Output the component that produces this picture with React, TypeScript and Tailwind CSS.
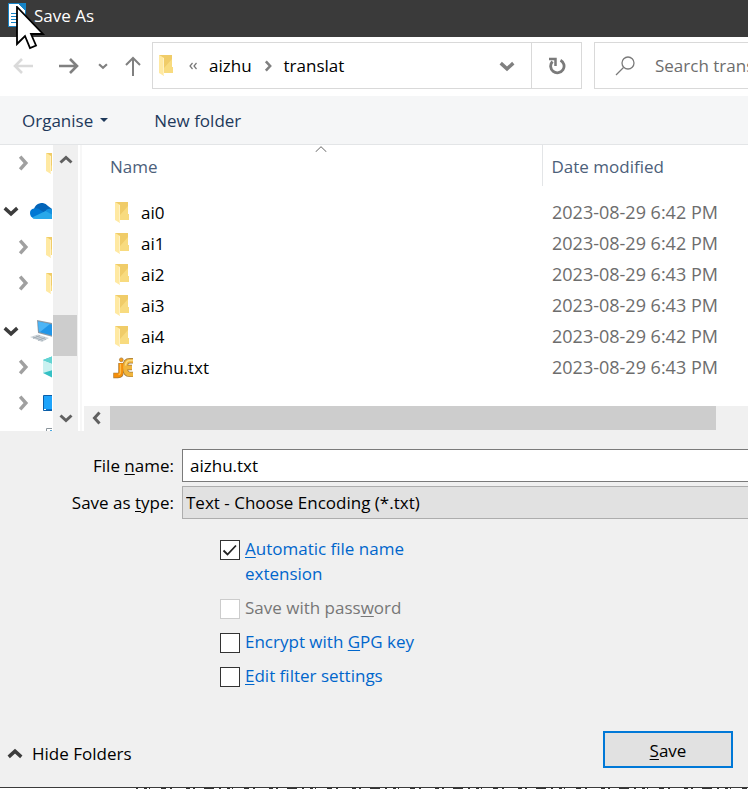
import type { ReactNode } from "react";

const folders = [
  { name: "ai0", date: "2023-08-29 6:42 PM" },
  { name: "ai1", date: "2023-08-29 6:42 PM" },
  { name: "ai2", date: "2023-08-29 6:43 PM" },
  { name: "ai3", date: "2023-08-29 6:43 PM" },
  { name: "ai4", date: "2023-08-29 6:42 PM" },
  { name: "aizhu.txt", date: "2023-08-29 6:43 PM", file: true },
];

type Direction = "up" | "down" | "left" | "right";

const chevrons: Record<Direction, string> = {
  up: "M1.5 9.5 7 4.5l5.5 5",
  down: "M1.5 4.5 7 9.5l5.5-5",
  left: "M9.5 1.5 4.5 7l5 5.5",
  right: "M4.5 1.5 9.5 7l-5 5.5",
};

function Chevron({ to, className = "size-4", width = 3 }: { to: Direction; className?: string; width?: number }) {
  return (
    <svg viewBox="0 0 14 14" className={`shrink-0 ${className}`} fill="none" stroke="currentColor" strokeWidth={width} aria-hidden="true">
      <path d={chevrons[to]} />
    </svg>
  );
}

function FolderIcon() {
  return (
    <svg viewBox="0 0 14 21" className="h-[21px] w-3.5 shrink-0" aria-hidden="true">
      <path d="M0 0h13v12h1v6H3z" fill="#f8db7f" />
      <path d="M0 0h13v4L5 13V3z" fill="#f0cc68" />
      <path d="M0 0l5 3v18l-5-3z" fill="#ffe9a2" />
      <path d="M4 3h1v18l-1-1z" fill="#fff1c4" />
    </svg>
  );
}

function JEditIcon() {
  return (
    <svg viewBox="0 0 21 22" className="-ml-0.5 h-[22px] w-[21px] shrink-0" fill="none" aria-hidden="true">
      <g stroke="#a07a3c" strokeWidth="5.4">
        <path d="M8 6v9q0 3.5-3 3.5H0.3" />
        <path d="M20 3.8h-3q-5 0-5 6.7t5 6.9h3M12 10.500h7" />
      </g>
      <path d="M20 3.800h-3q-5 0-5 6.700t5 6.900h3M12 10.500h7" stroke="#f0b43c" strokeWidth="4" />
      <path d="M20 3.500h-3q-4 0-4.500 5" stroke="#fbdc82" strokeWidth="1.500" />
      <path d="M8 6.300v9q0 3-3 3H.8" stroke="#f58e0a" strokeWidth="4.200" />
      <path d="M7.500 7v8q0 2.500-2 2.500" stroke="#fdbd4a" strokeWidth="1.300" />
      <circle cx="8.300" cy="2.800" r="1.900" fill="#fa9a15" stroke="#a07a3c" strokeWidth=".7" />
    </svg>
  );
}

function CloudIcon() {
  return (
    <svg viewBox="0 0 26 16" className="h-4 w-[26px] shrink-0" aria-hidden="true">
      <path d="M4 6a8 8 0 0 1 14-3l4 3-5 6L6 9z" fill="#0364b8" />
      <path d="M4 5.500q4-1 7 2l5 3-12 5Q0 14 0 10q0-4 4-4.500z" fill="#0078d4" />
      <path d="M16 7q3-2 6-1 4 1 4 5v3l-11-4z" fill="#1490df" />
      <path d="M2 14.500 15.500 8l10.500 5.500q-1 2.500-5 2.500H6q-3 0-4-1.500z" fill="#28a8ea" />
    </svg>
  );
}

function ComputerIcon() {
  return (
    <svg viewBox="0 0 28 24" className="h-6 w-7 shrink-0" aria-hidden="true">
      <path d="M7 1l20 4v14L8 14z" fill="#8d9aa5" />
      <path d="M8 2.500l19 4V18L9 13z" fill="#2196e8" />
      <path d="M8 2.500l12 2.500-10 8-1-.5z" fill="#4db5f5" />
      <path d="M0 18l8-2.500 11 3.500-7 4z" fill="#ced5da" />
      <path d="M3 18l10 3.500M6 17l10 3.500M3 19.500l7-3M8 21.500l7-3" stroke="#9eaab3" strokeWidth=".8" />
    </svg>
  );
}

function CubeIcon() {
  return (
    <svg viewBox="0 0 20 22" className="h-[22px] w-5 shrink-0" aria-hidden="true">
      <path d="M0 4l10-4 10 4v13l-10 5-10-5z" fill="#35c0c4" />
      <path d="M0 4l10 4v6L0 17z" fill="#c9f1f0" />
      <path d="M0 4l10-4v8z" fill="#62d4d3" />
    </svg>
  );
}

function DesktopIcon() {
  return (
    <svg viewBox="0 0 20 16" className="h-4 w-5 shrink-0" aria-hidden="true">
      <path d="M.5.5h19v15H.5z" fill="#1ea4fb" stroke="#0b5ea8" />
      <path d="M1 14.500h19" stroke="#0873cc" />
      <path d="M1 14.500h2" stroke="#fff" />
    </svg>
  );
}

function DocumentsIcon() {
  return (
    <svg viewBox="0 0 20 22" className="h-[22px] w-5 shrink-0" aria-hidden="true">
      <path d="M.5.500h17v21H.5z" fill="#fff" stroke="#8b959c" />
      <path d="M4 2h12v4H4z" fill="#4da9e0" />
    </svg>
  );
}

function TreeRow({ label, open, root, children }: { label: string; open?: boolean; root?: boolean; children: ReactNode }) {
  return (
    <li className={`flex h-9 shrink-0 items-center ${root ? "mt-3 gap-[11px] pl-[3px]" : "gap-[15px] pl-[15px]"}`}>
      <button type="button" aria-label={label} className={open ? "text-[#3c3c3c]" : "text-[#a0a0a0]"}>
        <Chevron to={open ? "down" : "right"} />
      </button>
      {children}
    </li>
  );
}

function Option({ id, checked, disabled, children }: { id: string; checked?: boolean; disabled?: boolean; children: ReactNode }) {
  return (
    <div className="flex items-start gap-[5px]">
      <span className="mt-1 grid size-5 shrink-0">
        <input
          id={id}
          type="checkbox"
          defaultChecked={checked}
          disabled={disabled}
          className="peer col-start-1 row-start-1 size-5 appearance-none border border-[#333] bg-white disabled:border-[#ccc]"
        />
        <svg viewBox="0 0 20 20" className="pointer-events-none invisible col-start-1 row-start-1 size-5 peer-checked:visible" fill="none" stroke="#222" strokeWidth="1.800" aria-hidden="true">
          <path d="M3.500 10.500l4 4L16 5.500" />
        </svg>
      </span>
      <label htmlFor={id} className={disabled ? "text-[#777]" : "text-[#0066cc]"}>
        {children}
      </label>
    </div>
  );
}

function Key({ children }: { children: string }) {
  return <span className="underline decoration-1 underline-offset-2">{children}</span>;
}

export default function App() {
  return (
    <div className="overflow-hidden bg-[#f0f0f0] font-['Open_Sans','Noto_Sans',sans-serif] text-[17px] leading-[25px] text-black">
      <header className="relative flex h-[37px] items-center gap-2 bg-[#3a3a3a] pb-[7px] pl-2 text-white">
        <svg viewBox="0 0 18 24" className="h-6 w-[18px]" aria-hidden="true">
          <path d="M.5.500h10l7 7v16H.5z" fill="#fff" stroke="#1583c6" />
          <path d="M10 0h8v8z" fill="#1583c6" />
          <path d="M3 10.500h11M3 13.500h11M3 16.500h11M3 19.500h8" stroke="#1583c6" />
        </svg>
        <h1>Save As</h1>
        <svg viewBox="0 0 30 44" className="absolute top-[6px] left-4 z-10 h-11 w-[30px]" aria-hidden="true">
          <path d="M1 1v37l8-8 5 12 6-2.500-5-11.500h12z" fill="#fff" stroke="#000" strokeWidth="1.800" />
        </svg>
      </header>

      <nav className="flex items-center bg-white pt-[5px] pb-[7px]" aria-label="Location">
        <button type="button" aria-label="Back" className="flex w-[46px] shrink-0 justify-center text-[#dadada]">
          <svg viewBox="0 0 20 18" className="h-[18px] w-5" fill="none" stroke="currentColor" strokeWidth="2.600">
            <path d="M20 9H2M9 2L2 9l7 7" />
          </svg>
        </button>
        <button type="button" aria-label="Forward" className="flex w-[45px] shrink-0 justify-center text-[#808080]">
          <svg viewBox="0 0 20 18" className="h-[18px] w-5" fill="none" stroke="currentColor" strokeWidth="2.600">
            <path d="M0 9h18M11 2l7 7-7 7" />
          </svg>
        </button>
        <button type="button" aria-label="Recent locations" className="flex w-[23px] shrink-0 justify-center text-[#808080]">
          <Chevron to="down" className="size-2.5" />
        </button>
        <button type="button" aria-label="Up" className="flex w-[38px] shrink-0 justify-center text-[#808080]">
          <svg viewBox="0 0 18 20" className="h-5 w-[18px]" fill="none" stroke="currentColor" strokeWidth="2">
            <path d="M9 20V2M2 9l7-7 7 7" />
          </svg>
        </button>
        <div className="flex h-[47px] min-w-0 flex-1 items-stretch border border-[#d9d9d9]">
          <div className="flex min-w-0 flex-1 items-center pl-1.5">
            <FolderIcon />
            <svg viewBox="0 0 8 8" className="ml-4 size-2" fill="none" stroke="#777" strokeWidth="1.200" aria-hidden="true">
              <path d="M3.500 1L1 4l2.500 3M7.500 1L5 4l2.500 3" />
            </svg>
            <button type="button" className="ml-3">aizhu</button>
            <span className="mx-2.5 flex text-[#808080]"><Chevron to="right" className="size-3" /></span>
            <button type="button">translat</button>
          </div>
          <button type="button" aria-label="Previous locations" className="flex w-12 items-center justify-center text-[#808080]">
            <Chevron to="down" />
          </button>
          <button type="button" aria-label="Refresh" className="flex w-[50px] items-center justify-center border-l border-[#d9d9d9]">
            <svg viewBox="0 0 18 18" className="size-[18px]" fill="none" stroke="#7a7a7a" strokeWidth="2.800">
              <path d="M12.500 3.200A6.700 6.700 0 1 1 4.500 4.500" />
              <path d="M1 2h6.500v7" strokeWidth="2.500" />
            </svg>
          </button>
        </div>
        <div className="ml-3 flex h-[47px] w-[154px] shrink-0 items-center border border-r-0 border-[#d9d9d9] pl-5">
          <svg viewBox="0 0 20 20" className="size-5 shrink-0" fill="none" stroke="#7a7a7a" strokeWidth="1.300" aria-hidden="true">
            <circle cx="13" cy="7" r="6" />
            <path d="M8.500 11.500L1 19" />
          </svg>
          <input type="search" aria-label="Search" placeholder="Search translat" className="ml-5 w-40 shrink-0 bg-transparent placeholder:text-[#6d6d6d]" />
        </div>
      </nav>

      <div className="flex h-[49px] items-center gap-[46px] border-b border-[#e3e5e7] bg-[#f5f6f7] pl-[22px] text-[#1e395b]">
        <button type="button" className="flex items-center gap-[7px]">
          Organise
          <svg viewBox="0 0 8 4" className="h-1 w-2" fill="currentColor" aria-hidden="true">
            <path d="M0 0h8L4 4z" />
          </svg>
        </button>
        <button type="button">New folder</button>
      </div>

      <main className="flex h-[286px] bg-white">
        <ul className="flex w-[52px] shrink-0 flex-col overflow-hidden" aria-label="Folders">
          <TreeRow label="Expand folder"><FolderIcon /></TreeRow>
          <TreeRow label="Collapse OneDrive" open root><CloudIcon /></TreeRow>
          <TreeRow label="Expand folder"><FolderIcon /></TreeRow>
          <TreeRow label="Expand folder"><FolderIcon /></TreeRow>
          <TreeRow label="Collapse This PC" open root><ComputerIcon /></TreeRow>
          <TreeRow label="Expand 3D Objects"><span className="-ml-[3px]"><CubeIcon /></span></TreeRow>
          <TreeRow label="Expand Desktop"><span className="-ml-[3px]"><DesktopIcon /></span></TreeRow>
          <TreeRow label="Expand Documents"><DocumentsIcon /></TreeRow>
        </ul>
        <div className="ml-px flex w-[25px] shrink-0 flex-col items-center bg-[#f0f0f0] text-[#606060]">
          <button type="button" aria-label="Scroll up" className="flex h-[30px] items-center"><Chevron to="up" className="size-3.5" /></button>
          <div className="flex w-full flex-1 flex-col justify-end pr-px pb-[49px]">
            <div className="h-[41px] bg-[#cdcdcd]" />
          </div>
          <button type="button" aria-label="Scroll down" className="flex h-[26px] items-center"><Chevron to="down" className="size-3.5" /></button>
        </div>
        <div className="ml-0.5 flex min-w-0 flex-1 flex-col justify-between border-l-2 border-[#f7f7f7]">
          <table className="w-full table-fixed text-left">
            <thead className="text-[#4c607a]">
              <tr className="h-[41px]">
                <th className="relative pt-px pl-7 font-normal" aria-sort="ascending">
                  Name
                  <svg viewBox="0 0 12 6" className="absolute top-px left-[233px] h-1.5 w-3" fill="none" stroke="#666" aria-hidden="true">
                    <path d="M.5 6L6 .7 11.500 6" />
                  </svg>
                </th>
                <th className="w-[206px] border-l border-[#e3e5e7] pt-px pl-[9px] font-normal">Date modified</th>
              </tr>
            </thead>
            <tbody className="before:block before:h-[11px]">
              {folders.map((entry) => (
                <tr key={entry.name} className="h-[31px]">
                  <td className="pl-[33px]">
                    <div className="flex items-center">
                      <span className="flex w-[26px]">{entry.file ? <JEditIcon /> : <FolderIcon />}</span>
                      {entry.name}
                    </div>
                  </td>
                  <td className="pl-2.5 text-[18px] text-[#6d6d6d]">{entry.date}</td>
                </tr>
              ))}
            </tbody>
          </table>
          <div className="ml-0.5 flex h-[25px] bg-[#f0f0f0] pb-px text-[#606060]">
            <button type="button" aria-label="Scroll left" className="flex w-[26px] items-center justify-center"><Chevron to="left" className="size-3.5" /></button>
            <div className="mr-8 flex-1 bg-[#cdcdcd]" />
          </div>
        </div>
      </main>

      <form className="pt-[18px]" onSubmit={(event) => event.preventDefault()}>
        <div className="grid grid-cols-[174px_1fr] items-center gap-x-2 gap-y-1">
          <label htmlFor="file-name" className="text-right">File <Key>n</Key>ame:</label>
          <input id="file-name" defaultValue="aizhu.txt" className="h-[33px] w-full border border-r-0 border-[#7a7a7a] bg-white px-[7px]" />
          <label htmlFor="file-type" className="text-right">Save as <Key>t</Key>ype:</label>
          <select id="file-type" className="h-[33px] w-full appearance-none border border-r-0 border-[#adadad] bg-[#e1e1e1] px-[3px]">
            <option>Text - Choose Encoding (*.txt)</option>
          </select>
        </div>

        <div className="mt-[17px] ml-[220px] flex w-[200px] flex-col gap-[9px]">
          <Option id="extension" checked><Key>A</Key>utomatic file name extension</Option>
          <Option id="password" disabled>Save with pass<Key>w</Key>ord</Option>
          <Option id="encrypt">Encrypt with <Key>G</Key>PG key</Option>
          <Option id="filter"><Key>E</Key>dit filter settings</Option>
        </div>

        <div className="mt-[43px] flex items-center justify-between pr-[15px] pb-[19px] pl-[7px]">
          <button type="button" className="flex items-center gap-[9px] pt-2">
            <span className="text-[#3c3c3c]"><Chevron to="up" /></span>
            Hide Folders
          </button>
          <button type="submit" className="h-[37px] w-[130px] border-2 border-[#0078d7] bg-[#e1e1e1] pt-0.5">
            <Key>S</Key>ave
          </button>
        </div>
      </form>

      <footer className="border-t border-[#3a3a3a] bg-white">
        <svg className="block h-px w-full" stroke="#333" aria-hidden="true">
          <path d="M136 .5H748" strokeDasharray="2 6 3 2 1 11 5 4 2 14 4 3 2 9 10 5" />
        </svg>
      </footer>
    </div>
  );
}
